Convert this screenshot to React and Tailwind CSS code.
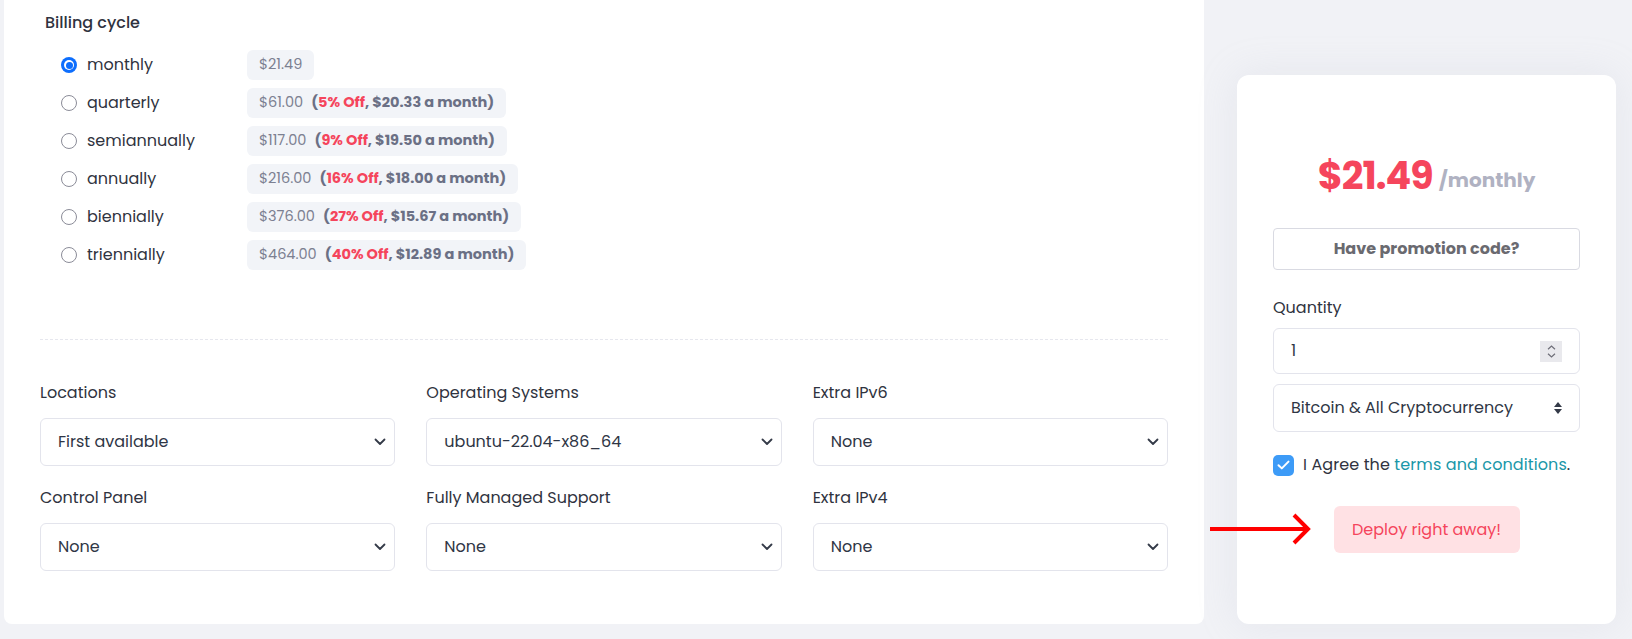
import React from 'react';

const cycles = [
  { id: 'monthly', label: 'monthly', price: '$21.49', checked: true },
  { id: 'quarterly', label: 'quarterly', price: '$61.00', off: '5% Off', month: '$20.33' },
  { id: 'semiannually', label: 'semiannually', price: '$117.00', off: '9% Off', month: '$19.50' },
  { id: 'annually', label: 'annually', price: '$216.00', off: '16% Off', month: '$18.00' },
  { id: 'biennially', label: 'biennially', price: '$376.00', off: '27% Off', month: '$15.67' },
  { id: 'triennially', label: 'triennially', price: '$464.00', off: '40% Off', month: '$12.89' },
];

const fields = [
  { label: 'Locations', value: 'First available' },
  { label: 'Operating Systems', value: 'ubuntu-22.04-x86_64' },
  { label: 'Extra IPv6', value: 'None' },
  { label: 'Control Panel', value: 'None' },
  { label: 'Fully Managed Support', value: 'None' },
  { label: 'Extra IPv4', value: 'None' },
];

const Chevron = () => (
  <svg width="12" height="8" viewBox="0 0 12 8" fill="none">
    <path d="M1.5 1.5L6 6l4.5-4.5" stroke="#343a48" strokeWidth="1.8" strokeLinecap="round" strokeLinejoin="round" />
  </svg>
);

const Radio = ({ checked }) =>
  checked ? (
    <span className="w-[16px] h-[16px] rounded-full bg-[#0d6efd] flex items-center justify-center">
      <span className="w-[10px] h-[10px] rounded-full bg-white flex items-center justify-center">
        <span className="w-[7px] h-[7px] rounded-full bg-[#0d6efd]" />
      </span>
    </span>
  ) : (
    <span className="w-[16px] h-[16px] rounded-full border-[1.5px] border-[#8b8c98] bg-white" />
  );

const App = () => {
  return (
    <div
      className="relative min-h-screen bg-[#f1f2f6] flex items-start pl-[4px] gap-[33px] text-[#333744]"
      style={{ fontFamily: '"Poppins", "Open Sans", sans-serif' }}
    >
      {/* left: config panel */}
      <div className="w-[1200px] h-[624px] bg-white rounded-b-lg px-[36px] pt-[11px]">
        <div className="pl-[5px] text-[16px] font-medium leading-[24px] text-[#2f3340]">Billing cycle</div>
        <div className="mt-[15px] flex flex-col gap-[8px] pl-[21px]">
          {cycles.map((c) => (
            <div key={c.id} className="flex items-center h-[30px]">
              <Radio checked={c.checked} />
              <span className="ml-[10px] w-[160px] text-[16px] text-[#2f3340]">{c.label}</span>
              <span className="h-[30px] flex items-center px-[12px] rounded-md bg-[#f2f4f8] text-[14.5px] text-[#7c8091]">
                {c.price}
                {c.off && (
                  <span className="ml-[8px] font-bold text-[#6b7085]">
                    (<span className="text-[#f5455c]">{c.off}</span>, {c.month} a month)
                  </span>
                )}
              </span>
            </div>
          ))}
        </div>
        <div className="mt-[69px] border-t border-dashed border-[#e6e7ee]" />
        <div className="mt-[41px] grid grid-cols-3 gap-x-[31px] gap-y-[20px]">
          {fields.map((f) => (
            <div key={f.label}>
              <div className="text-[16px] leading-[24px] text-[#2f3340] mb-[13px]">{f.label}</div>
              <div className="h-[48px] rounded-md border border-[#e3e4ec] flex items-center justify-between pl-[17px] pr-[8px] text-[16px] text-[#2f3645]">
                <span>{f.value}</span>
                <Chevron />
              </div>
            </div>
          ))}
        </div>
      </div>

      {/* right: order summary */}
      <div className="mt-[75px] w-[379px] h-[549px] bg-white rounded-xl shadow-[0_0_40px_rgba(180,182,200,0.18)] px-[36px] pt-[76px]">
        <div className="h-[48px] flex items-center justify-center gap-[6px]">
          <span className="text-[38px] font-bold text-[#f5455c] tracking-tight">$21.49</span>
          <span className="mt-[10px] text-[20px] font-bold text-[#b0b2c2]">/monthly</span>
        </div>
        <button className="mt-[29px] w-full h-[42px] rounded border border-[#d9dae2] bg-white text-[16px] font-bold text-[#6a6a70]">
          Have promotion code?
        </button>
        <div className="mt-[26px] text-[16px] leading-[24px] text-[#2f3340]">Quantity</div>
        <div className="relative mt-[8px] h-[46px] rounded-md border border-[#e3e4ec] flex items-center pl-[17px] text-[16px] text-[#2f3645]">
          1
          <div className="absolute right-[17px] top-[12px] w-[22px] h-[21px] bg-[#e9e9ed] flex flex-col items-center justify-center gap-[3px]">
            <svg width="9" height="5" viewBox="0 0 9 5" fill="none">
              <path d="M1 4.2L4.5 1 8 4.2" stroke="#6e6e78" strokeWidth="1.2" />
            </svg>
            <svg width="9" height="5" viewBox="0 0 9 5" fill="none">
              <path d="M1 0.8L4.5 4 8 0.8" stroke="#6e6e78" strokeWidth="1.2" />
            </svg>
          </div>
        </div>
        <div className="mt-[10px] h-[48px] rounded-md border border-[#e3e4ec] flex items-center justify-between pl-[17px] pr-[16px] text-[16px] text-[#2f3645]">
          <span>Bitcoin &amp; All Cryptocurrency</span>
          <svg width="10" height="14" viewBox="0 0 10 14">
            <path d="M5 1L9 6H1z" fill="#343a48" />
            <path d="M5 13L1 8h8z" fill="#343a48" />
          </svg>
        </div>
        <div className="mt-[21px] h-[24px] flex items-center gap-[9px] text-[16px] text-[#2f3340]">
          <span className="w-[21px] h-[21px] rounded-[5px] bg-[#3d9bf7] flex items-center justify-center">
            <svg width="13" height="10" viewBox="0 0 13 10" fill="none">
              <path d="M1.5 5.2L4.8 8.4 11.5 1.6" stroke="white" strokeWidth="2" strokeLinecap="round" strokeLinejoin="round" />
            </svg>
          </span>
          <span className="tracking-[0.1px]">
            I Agree the <span className="text-[#1a97a8]">terms and conditions</span>.
          </span>
        </div>
        <div className="mt-[29px] flex justify-center">
          <button className="w-[186px] h-[47px] rounded-md bg-[#ffe1e4] text-[16px] text-[#f5455c]">Deploy right away!</button>
        </div>
      </div>

      {/* annotation arrow */}
      <svg className="absolute left-[1210px] top-[513px]" width="102" height="32" viewBox="0 0 102 32" fill="none">
        <path d="M0 16H98" stroke="#ff0000" strokeWidth="4" />
        <path d="M84 2L98 16 84 30" stroke="#ff0000" strokeWidth="4" />
      </svg>
    </div>
  );
};

export default App;
